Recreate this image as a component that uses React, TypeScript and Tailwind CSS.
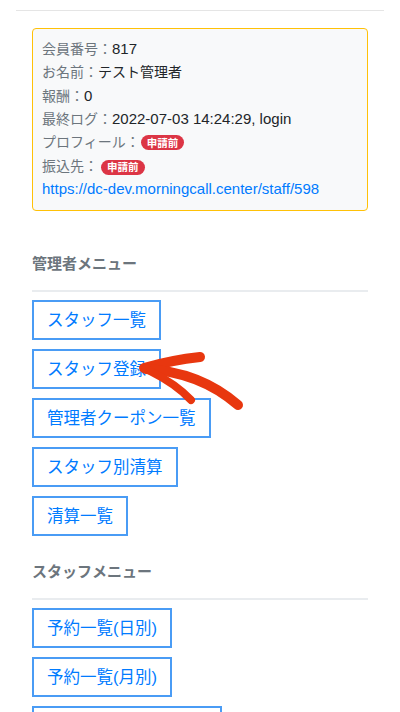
import React from "react";

const font = { fontFamily: '"Liberation Sans", "Noto Sans CJK JP", sans-serif' };

function Btn({ children }: { children: React.ReactNode }) {
  return (
    <a className="inline-flex h-10 items-center border-2 border-[#4a9cf5] px-[13px] text-[16.5px] leading-none text-[#007bff]">
      {children}
    </a>
  );
}

function Badge() {
  return (
    <span className="ml-[1px] inline-flex h-[15px] items-center rounded-full bg-[#dc3545] px-[6px] text-[10.5px] font-bold leading-none text-white">
      申請前
    </span>
  );
}

function Row({ label, children }: { label: string; children?: React.ReactNode }) {
  return (
    <div className="flex items-center h-[23.33px] text-[14px]">
      <span className="text-[#6c757d]">{label}</span>
      {children}
    </div>
  );
}

export default function App() {
  return (
    <div className="relative w-[400px] h-[712px] overflow-hidden bg-white" style={font}>
      <div className="mx-4 mt-[10px] border-t border-[#e5e5e5]">
        <div className="px-4">
          <div className="mt-[17px] rounded-[4px] border border-[#ffc107] bg-[#f8f9fa] px-[9px] py-[9px]">
            <Row label="会員番号：">
              <span className="text-[15px] text-[#212529]">817</span>
            </Row>
            <Row label="お名前：">
              <span className="text-[#212529]">テスト管理者</span>
            </Row>
            <Row label="報酬：">
              <span className="text-[15px] text-[#212529]">0</span>
            </Row>
            <Row label="最終ログ：">
              <span className="text-[15px] text-[#212529]">2022-07-03 14:24:29, login</span>
            </Row>
            <Row label="プロフィール：">
              <Badge />
            </Row>
            <Row label="振込先：">
              <span className="ml-[2px]">
                <Badge />
              </span>
            </Row>
            <div className="flex items-center h-[23.33px] text-[15px] text-[#007bff]">
              https://dc-dev.morningcall.center/staff/598
            </div>
          </div>

          <h3 className="mt-[41px] text-[15px] font-bold leading-[24px] text-[#6c757d]">管理者メニュー</h3>
          <div className="mt-[14px] border-t-2 border-[#e9ecef]" />
          <div className="mt-[8px] flex flex-col items-start gap-[9px]">
            <Btn>スタッフ一覧</Btn>
            <Btn>スタッフ登録</Btn>
            <Btn>管理者クーポン一覧</Btn>
            <Btn>スタッフ別清算</Btn>
            <Btn>清算一覧</Btn>
          </div>

          <h3 className="mt-[24px] text-[15px] font-bold leading-[24px] text-[#6c757d]">スタッフメニュー</h3>
          <div className="mt-[14px] border-t-2 border-[#e9ecef]" />
          <div className="mt-[8px] flex flex-col items-start gap-[9px]">
            <Btn>予約一覧(日別)</Btn>
            <Btn>予約一覧(月別)</Btn>
            <Btn>予約一覧(スタッフ別)</Btn>
          </div>
        </div>
      </div>

      <svg
        className="pointer-events-none absolute left-0 top-0"
        width="400"
        height="712"
        viewBox="0 0 400 712"
      >
        <g fill="none" stroke="#e8370f" strokeLinecap="round" strokeLinejoin="round">
          <path d="M144 368 Q172 360 200 357" strokeWidth="10" />
          <path d="M146 369 Q200 372 238 405" strokeWidth="10" />
          <path d="M150 371 Q176 384 191 400" strokeWidth="8" />
        </g>
      </svg>
    </div>
  );
}
